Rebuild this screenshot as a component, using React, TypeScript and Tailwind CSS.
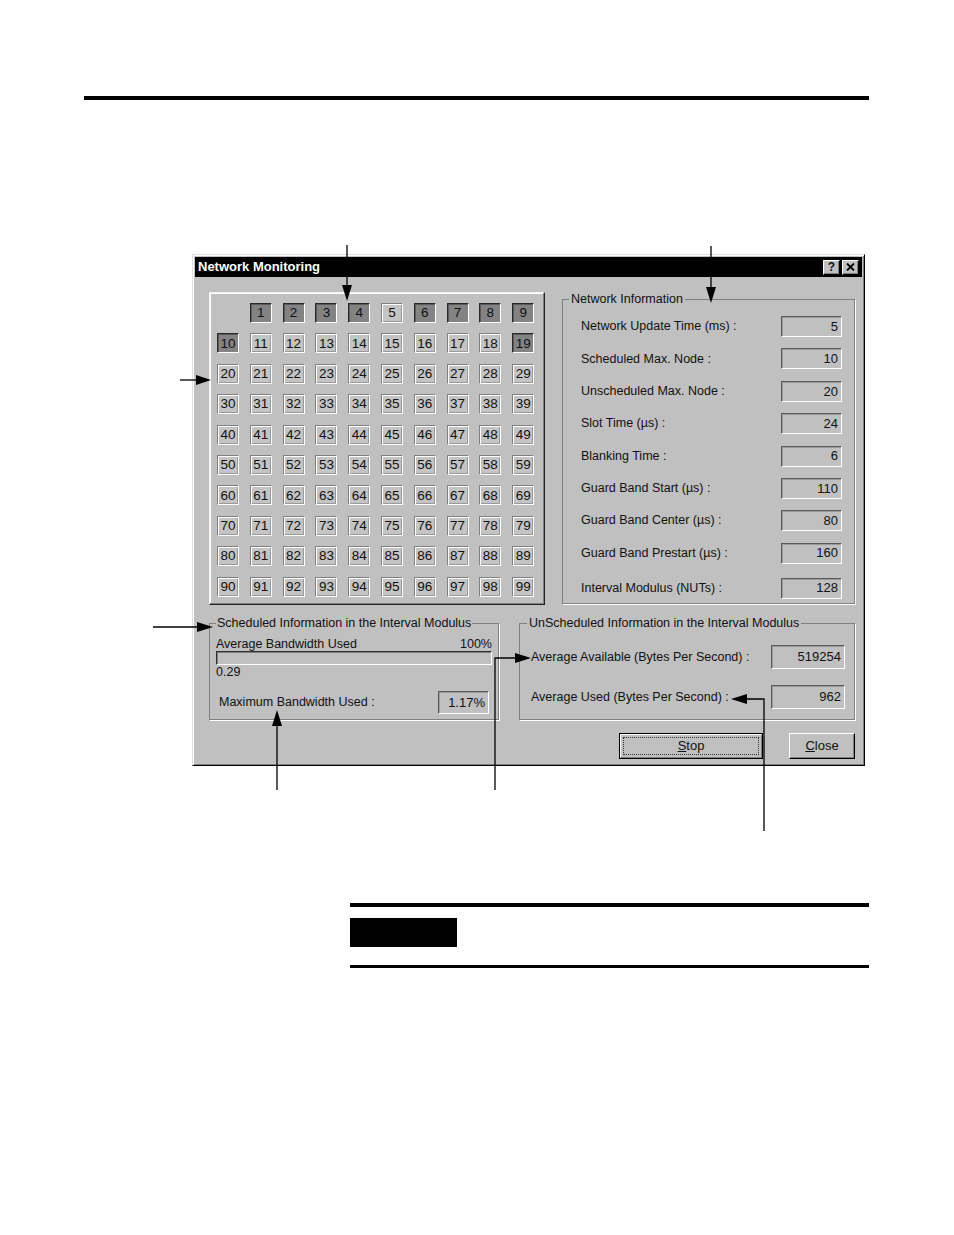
import React from "react";

const FONT = { fontFamily: '"Liberation Sans", Arial, sans-serif' };

const darkNodes = new Set([1, 2, 3, 4, 6, 7, 8, 9, 10, 19]);

const networkInfo: [string, string][] = [
  ["Network Update Time (ms) :", "5"],
  ["Scheduled Max. Node :", "10"],
  ["Unscheduled Max. Node :", "20"],
  ["Slot Time (µs) :", "24"],
  ["Blanking Time :", "6"],
  ["Guard Band Start (µs) :", "110"],
  ["Guard Band Center (µs) :", "80"],
  ["Guard Band Prestart (µs) :", "160"],
  ["Interval Modulus (NUTs) :", "128"],
];

function NodeCell({ n }: { n: number }) {
  const dark = darkNodes.has(n);
  return (
    <div
      className={`flex h-[20px] w-[22px] items-center justify-center border text-[13.5px] leading-none ${
        dark
          ? "border-t-[#2a2a2a] border-l-[#2a2a2a] border-b-white border-r-white bg-[#838383] shadow-[inset_1px_1px_0_#5a5a5a]"
          : "border-t-[#808080] border-l-[#808080] border-b-white border-r-white bg-[#c4c4c4] shadow-[inset_1px_1px_0_#ffffff,inset_-1px_-1px_0_#9a9a9a]"
      }`}
    >
      {n}
    </div>
  );
}

function ValueBox({ value, className }: { value: string; className: string }) {
  return (
    <div
      className={`flex items-center justify-end border border-t-[#5a5a5a] border-l-[#5a5a5a] border-b-white border-r-white bg-[#c0c0c0] pr-[3px] text-[13px] shadow-[inset_1px_1px_0_#9a9a9a] ${className}`}
    >
      {value}
    </div>
  );
}

function Group({
  title,
  className,
  legendClass,
  children,
}: {
  title: string;
  className: string;
  legendClass: string;
  children: React.ReactNode;
}) {
  return (
    <fieldset
      className={`m-0 border border-[#808080] p-0 shadow-[1px_1px_0_#ffffff] ${className}`}
    >
      <legend className={`text-[12.5px] leading-[14px] ${legendClass}`}>{title}</legend>
      {children}
    </fieldset>
  );
}

function Arrows() {
  return (
    <svg
      className="pointer-events-none absolute left-0 top-0"
      width={954}
      height={1235}
      viewBox="0 0 954 1235"
    >
      <g stroke="#000" strokeWidth={1.3} fill="none">
        <line x1={347} y1={245} x2={347} y2={288} />
        <line x1={711} y1={246} x2={711} y2={290} />
        <line x1={180} y1={380} x2={198} y2={380} />
        <line x1={153} y1={627} x2={200} y2={627} />
        <line x1={277} y1={790} x2={277} y2={722} />
        <polyline points="495,790 495,658 518,658" />
        <polyline points="764,831 764,699 745,699" />
      </g>
      <g fill="#000">
        <polygon points="342,285 352,285 347,301" />
        <polygon points="706,287 716,287 711,303" />
        <polygon points="196,375 196,385 211,380" />
        <polygon points="197,622 197,632 213,627" />
        <polygon points="272,726 282,726 277,710" />
        <polygon points="515,653 515,663 531,658" />
        <polygon points="747,694 747,704 731,699" />
      </g>
    </svg>
  );
}

export default function App() {
  const cells: (number | null)[] = [null, ...Array.from({ length: 99 }, (_, i) => i + 1)];

  return (
    <div className="relative h-[1235px] w-[954px] overflow-hidden bg-white text-[#111]" style={FONT}>
      <div className="ml-[84px] mt-[96px] h-[4px] w-[785px] bg-black" />

      {/* dialog window */}
      <div className="ml-[192px] mt-[154px] h-[512px] w-[673px] border border-t-[#dfdfdf] border-l-[#dfdfdf] border-b-black border-r-black bg-[#c0c0c0] p-[2px] shadow-[inset_1px_1px_0_#ffffff,inset_-1px_-1px_0_#808080]">
        <div className="flex h-[20px] items-center justify-between bg-black pl-[3px] pr-[3px]">
          <span className="text-[13px] font-bold text-white">Network Monitoring</span>
          <div className="flex gap-[2px]">
            <div className="flex h-[15px] w-[17px] items-center justify-center border border-t-white border-l-white border-b-black border-r-black bg-[#c0c0c0] text-[12px] font-bold leading-none shadow-[inset_-1px_-1px_0_#808080]">
              ?
            </div>
            <div className="flex h-[15px] w-[17px] items-center justify-center border border-t-white border-l-white border-b-black border-r-black bg-[#c0c0c0] shadow-[inset_-1px_-1px_0_#808080]">
              <svg width="9" height="8" viewBox="0 0 9 8">
                <path d="M1 0.5 L8 7.5 M8 0.5 L1 7.5" stroke="#000" strokeWidth="1.8" />
              </svg>
            </div>
          </div>
        </div>

        <div className="pl-[14px] pr-[7px] pt-[15px]">
          <div className="flex gap-[17px]">
            {/* node grid */}
            <div className="h-[313px] w-[336px] border border-t-[#f4f4f4] border-l-[#f4f4f4] border-b-[#222] border-r-[#222] pl-[7px] pt-[10px] shadow-[inset_-1px_-1px_0_#808080,inset_1px_1px_0_#ffffff]">
              <div className="grid grid-cols-[repeat(10,22px)] gap-x-[10.8px] gap-y-[10.4px]">
                {cells.map((n, i) =>
                  n === null ? <div key={i} className="h-[20px] w-[22px]" /> : <NodeCell key={i} n={n} />
                )}
              </div>
            </div>

            <Group title="Network Information" className="h-[312px] w-[293px]" legendClass="ml-[6px] px-[2px]">
              <div className="flex flex-col gap-[11.4px] pl-[18px] pr-[12px] pt-[10px] text-[12.5px]">
                {networkInfo.map(([label, value], i) => (
                  <div
                    key={label}
                    className={`flex h-[21px] items-center justify-between ${i === networkInfo.length - 1 ? "mt-[2.5px]" : ""}`}
                  >
                    <span>{label}</span>
                    <ValueBox value={value} className="h-[21px] w-[61px]" />
                  </div>
                ))}
              </div>
            </Group>
          </div>

          <div className="mt-[11px] flex gap-[20px]">
            <Group
              title="Scheduled Information in the Interval Modulus"
              className="h-[104px] w-[290px]"
              legendClass="ml-[6px] px-[1px]"
            >
              <div className="pl-[6px] pr-[6px] pt-[8px] text-[12.5px]">
                <div className="flex h-[13px] items-end justify-between leading-[14px]">
                  <span>Average Bandwidth Used</span>
                  <span>100%</span>
                </div>
                <div className="h-[14px] border border-t-[#303030] border-l-[#303030] border-b-white border-r-white shadow-[inset_1px_1px_0_#808080]" />
                <div className="leading-[14px]">0.29</div>
                <div className="mt-[12px] flex items-center justify-between pl-[3px] pr-[3px]">
                  <span>Maximum Bandwidth Used :</span>
                  <ValueBox value="1.17%" className="h-[23px] w-[51px]" />
                </div>
              </div>
            </Group>

            <Group
              title="UnScheduled Information in the Interval Modulus"
              className="h-[104px] w-[336px]"
              legendClass="ml-[7px] px-[2px]"
            >
              <div className="flex flex-col gap-[16px] pl-[11px] pr-[9px] pt-[15px] text-[12.5px]">
                <div className="flex items-center justify-between">
                  <span>Average Available (Bytes Per Second) :</span>
                  <ValueBox value="519254" className="h-[24px] w-[74px]" />
                </div>
                <div className="flex items-center justify-between">
                  <span>Average Used (Bytes Per Second) :</span>
                  <ValueBox value="962" className="h-[24px] w-[74px]" />
                </div>
              </div>
            </Group>
          </div>

          <div className="mt-[13px] flex justify-end gap-[26px]">
            <div className="h-[26px] w-[144px] border border-black bg-[#c0c0c0]">
              <div className="h-full w-full border border-t-white border-l-white border-b-[#808080] border-r-[#808080] p-[2px]">
                <div className="flex h-full w-full items-center justify-center border border-dotted border-[#333] text-[13px]">
                  <span>
                    <span className="underline">S</span>top
                  </span>
                </div>
              </div>
            </div>
            <div className="flex h-[26px] w-[66px] items-center justify-center border border-t-white border-l-white border-b-black border-r-black bg-[#c0c0c0] text-[13px] shadow-[inset_-1px_-1px_0_#808080]">
              <span>
                <span className="underline">C</span>lose
              </span>
            </div>
          </div>
        </div>
      </div>

      <div className="ml-[350px] mt-[137px] h-[4px] w-[519px] bg-black" />
      <div className="ml-[350px] mt-[11px] h-[29px] w-[107px] bg-black" />
      <div className="ml-[350px] mt-[18px] h-[3px] w-[519px] bg-black" />

      <Arrows />
    </div>
  );
}
